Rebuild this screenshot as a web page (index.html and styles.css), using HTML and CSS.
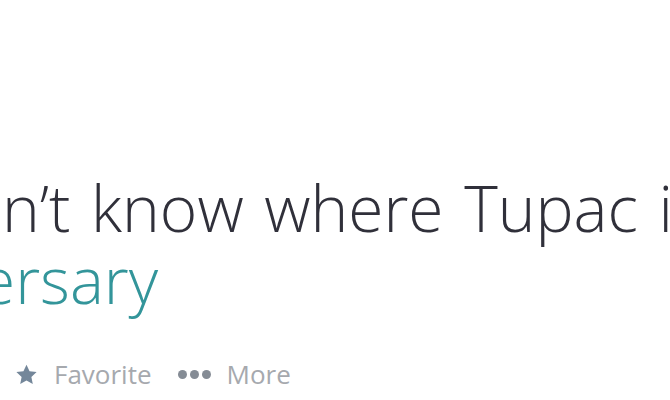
FILE: index.html
```html
<!DOCTYPE html>
<html>
<head>
<meta charset="utf-8">
<link rel="stylesheet" href="styles.css">
</head>
<body>
<div class="tweet">
  <p class="text"><span class="line">n’t know where Tupac i</span><span class="line link">ersary</span></p>
  <div class="actions">
    <span class="action">
      <svg class="star" viewBox="0 0 24 22" width="23" height="21" aria-hidden="true"><path d="M12 0.8l3.2 6.9 7.4 0.8-5.5 5.1 1.5 7.4-6.6-3.8-6.6 3.8 1.5-7.4-5.5-5.1 7.4-0.8z"/></svg>
      <span class="label">Favorite</span>
    </span>
    <span class="action">
      <span class="dots"><i></i><i></i><i></i></span>
      <span class="label">More</span>
    </span>
  </div>
</div>
</body>
</html>
```
FILE: styles.css
```css
html, body {
  margin: 0;
  padding: 0;
  background: #ffffff;
  overflow: hidden;
}
.tweet {
  width: 670px;
  height: 400px;
  padding-top: 172px;
  box-sizing: border-box;
  font-family: "Open Sans", "DejaVu Sans", sans-serif;
  overflow: hidden;
}
.text {
  margin: 0;
  font-size: 64px;
  font-weight: 350;
  line-height: 72px;
  color: #30303a;
  white-space: nowrap;
  word-spacing: 4px;
  display: flex;
  flex-direction: column;
  margin-left: 2px;
}
.link {
  color: #33959a;
  margin-left: -22px;
}
.actions {
  display: flex;
  align-items: center;
  gap: 26px;
  padding-left: 15px;
  margin-top: 40px;
}
.action {
  display: flex;
  align-items: center;
  gap: 16px;
}
.star {
  fill: #74879a;
}
.label {
  font-size: 26px;
  color: #a6a9ae;
}
.dots {
  display: flex;
  gap: 3px;
}
.dots i {
  width: 9px;
  height: 9px;
  border-radius: 50%;
  background: #858c95;
}
```
